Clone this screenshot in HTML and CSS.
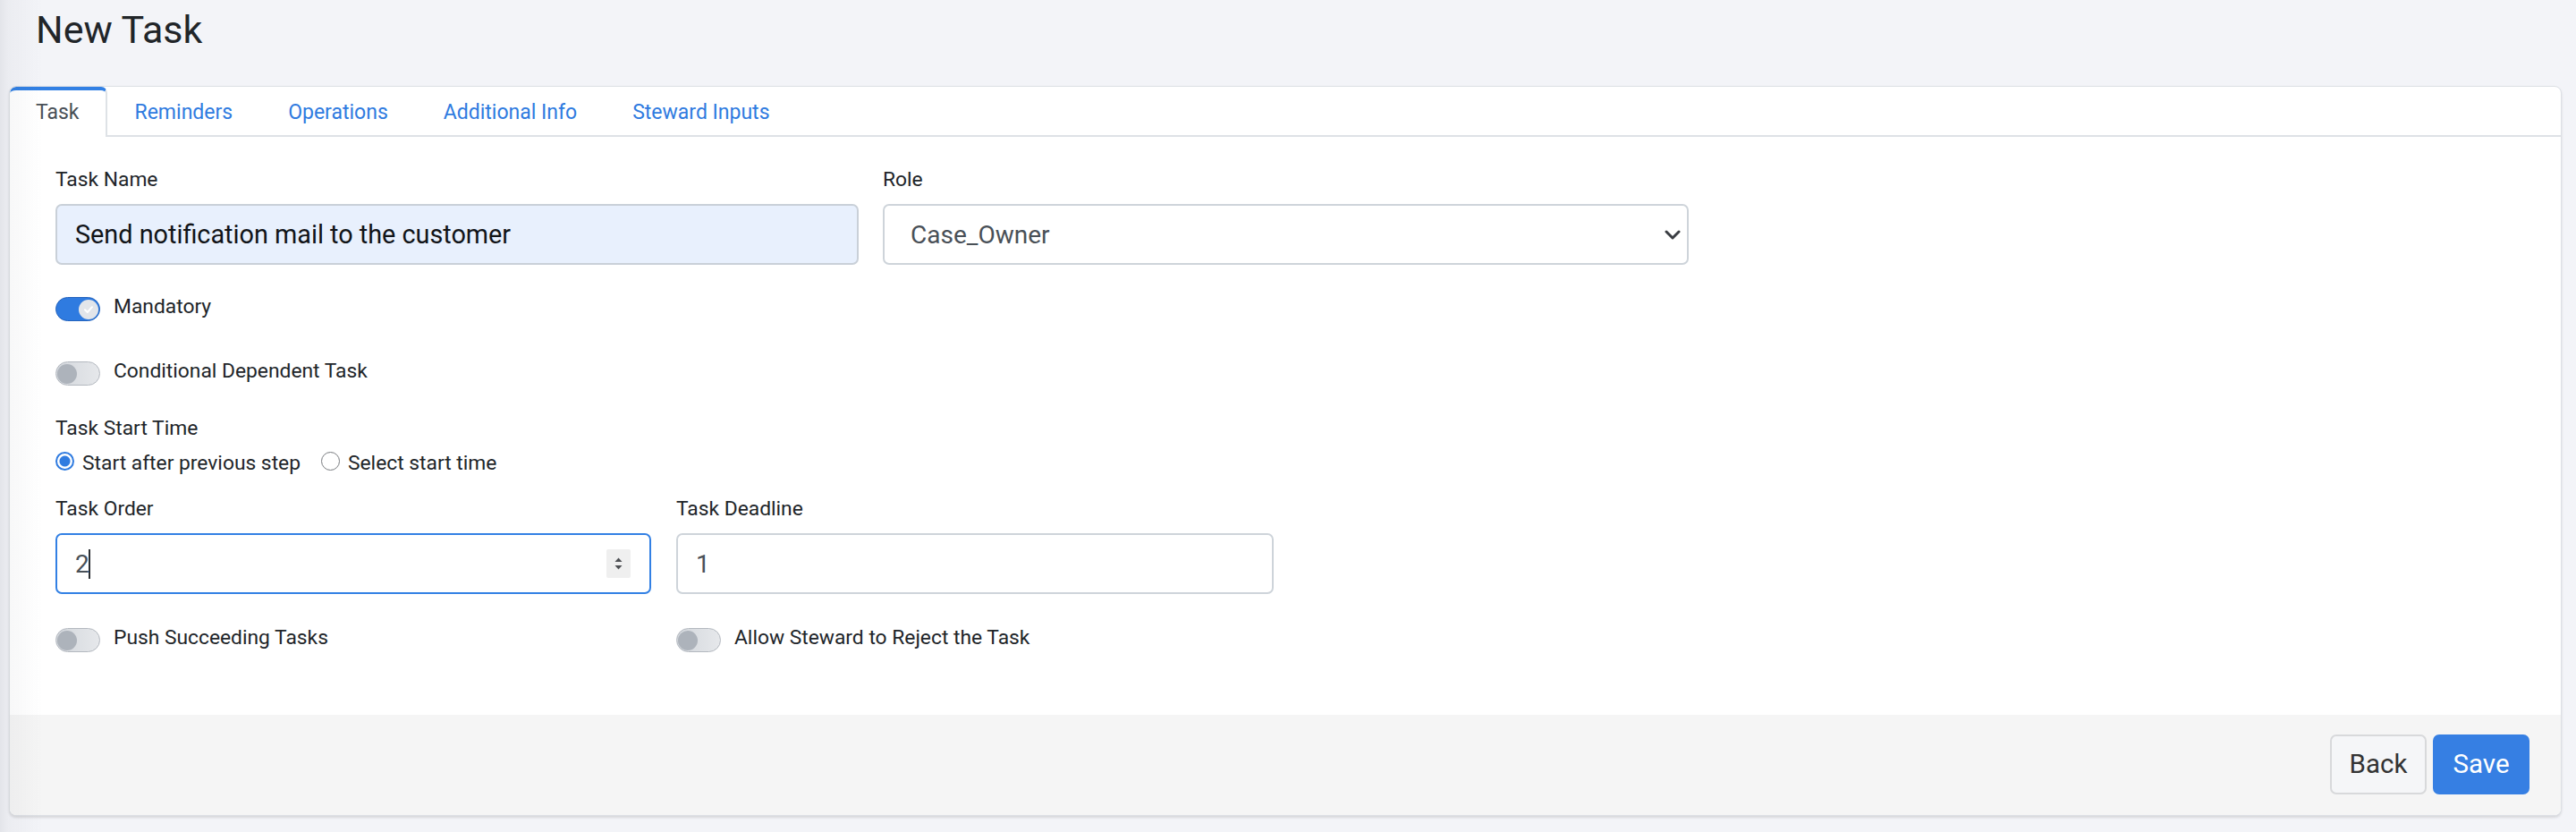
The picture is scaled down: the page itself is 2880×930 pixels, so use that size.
FILE: index.html
```html
<!DOCTYPE html>
<html lang="en">
<head>
<meta charset="utf-8">
<title>New Task</title>
<link rel="stylesheet" href="styles.css">
</head>
<body>
<div class="page">
  <header class="page-header">
    <h1 class="page-title">New Task</h1>
  </header>

  <section class="card">
    <nav class="tabs">
      <a class="tab tab-active">Task</a>
      <a class="tab">Reminders</a>
      <a class="tab">Operations</a>
      <a class="tab">Additional Info</a>
      <a class="tab">Steward Inputs</a>
    </nav>

    <div class="card-body">
      <div class="grid grid-wide">
        <div class="field">
          <label class="label">Task Name</label>
          <div class="control control-autofill">Send notification mail to the customer</div>
        </div>
        <div class="field">
          <label class="label">Role</label>
          <div class="control control-select">
            <span class="select-value">Case_Owner</span>
            <svg class="chevron" width="18" height="11" viewBox="0 0 18 11"><path d="M2 2 L9 9 L16 2" fill="none" stroke="#3a3d42" stroke-width="3" stroke-linecap="round" stroke-linejoin="round"/></svg>
          </div>
        </div>
      </div>

      <div class="switch-row row-mandatory">
        <span class="switch switch-on">
          <span class="knob">
            <svg width="12" height="10" viewBox="0 0 12 10"><path d="M2 5.2 L4.8 8 L10 2.2" fill="none" stroke="#ffffff" stroke-width="2" stroke-linecap="round" stroke-linejoin="round"/></svg>
          </span>
        </span>
        <span class="switch-text">Mandatory</span>
      </div>

      <div class="switch-row row-conditional">
        <span class="switch"><span class="knob"></span></span>
        <span class="switch-text">Conditional Dependent Task</span>
      </div>

      <div class="label label-start">Task Start Time</div>
      <div class="radio-row">
        <span class="radio radio-checked"></span>
        <span class="radio-text">Start after previous step</span>
        <span class="radio"></span>
        <span class="radio-text">Select start time</span>
      </div>

      <div class="grid grid-narrow row-order">
        <div class="field">
          <label class="label">Task Order</label>
          <div class="control control-focus">
            <span class="value">2<span class="caret"></span></span>
            <span class="spinner">
              <svg width="27" height="32" viewBox="0 0 27 32"><path d="M13.5 9.5 L17.5 14 L9.5 14 Z" fill="#4d4f53"/><path d="M9.5 18 L17.5 18 L13.5 22.5 Z" fill="#4d4f53"/></svg>
            </span>
          </div>
        </div>
        <div class="field">
          <label class="label">Task Deadline</label>
          <div class="control"><span class="value">1</span></div>
        </div>
      </div>

      <div class="grid grid-narrow row-push">
        <div class="switch-row">
          <span class="switch"><span class="knob"></span></span>
          <span class="switch-text">Push Succeeding Tasks</span>
        </div>
        <div class="switch-row">
          <span class="switch"><span class="knob"></span></span>
          <span class="switch-text">Allow Steward to Reject the Task</span>
        </div>
      </div>
    </div>

    <footer class="card-footer">
      <button class="btn btn-back">Back</button>
      <button class="btn btn-save">Save</button>
    </footer>
  </section>
</div>
</body>
</html>
```

FILE: styles.css
```css
* { box-sizing: border-box; }

html, body {
  margin: 0;
  padding: 0;
}

body {
  background: #f3f4f8;
  font-family: Roboto, "Noto Sans", "Liberation Sans", sans-serif;
  color: #212529;
  height: 930px;
  overflow: hidden;
}

body::before {
  content: "";
  position: fixed;
  top: 0;
  left: 0;
  bottom: 0;
  width: 48px;
  pointer-events: none;
  z-index: 5;
  background: linear-gradient(to right, rgba(40, 45, 60, 0.07) 0, rgba(40, 45, 60, 0.035) 10px, rgba(40, 45, 60, 0) 48px);
}

.page {
  padding: 0 16px 0 10px;
}

.page-header {
  height: 96px;
  padding: 7px 0 0 30px;
}

.page-title {
  margin: 0;
  font-size: 43px;
  line-height: 52px;
  font-weight: 400;
  color: #212529;
}

.card {
  background: #ffffff;
  border: 1px solid #dde0e5;
  border-radius: 8px;
  box-shadow: 0 2px 3px rgba(0, 0, 0, 0.12);
  height: 816px;
  display: flex;
  flex-direction: column;
  overflow: hidden;
}

.tabs {
  display: flex;
  height: 56px;
  border-bottom: 2px solid #dee2e6;
  flex: none;
}

.tab {
  display: block;
  height: 56px;
  padding: 0 30px;
  border: 1px solid transparent;
  border-top: 3px solid transparent;
  border-bottom: none;
  font-size: 23px;
  line-height: 51px;
  color: #2f7be0;
  text-decoration: none;
  border-radius: 7px 7px 0 0;
}

.tab-active {
  color: #495057;
  background: #ffffff;
  border-color: #dee2e6;
  border-width: 0 2px 0 0;
  border-top: 4px solid #3280e4;
  padding-left: 29px;
  padding-right: 29px;
  line-height: 50px;
}

.card-body {
  flex: 1;
  padding: 31px 51px 0 51px;
}

.grid {
  display: grid;
}

.grid-wide {
  grid-template-columns: 898px 901px;
  column-gap: 27px;
}

.grid-narrow {
  grid-template-columns: 666px 668px;
  column-gap: 28px;
}

.field {
  display: flex;
  flex-direction: column;
}

.label {
  display: block;
  font-size: 22.8px;
  line-height: 33px;
  color: #212529;
  margin-bottom: 11px;
}

.control {
  height: 68px;
  border: 2px solid #ced4da;
  border-radius: 7px;
  background: #ffffff;
  padding: 0 20px;
  display: flex;
  align-items: center;
  font-size: 28px;
  color: #495057;
}

.control-autofill {
  background: #e8f0fd;
  border-color: #c9d0d8;
  color: #111418;
  font-size: 28.8px;
}

.control-select {
  justify-content: space-between;
  padding: 0 7px 0 29px;
}

.chevron {
  display: block;
}

.control-focus {
  border-color: #3280e4;
  justify-content: space-between;
  padding-right: 21px;
}

.value {
  display: flex;
  align-items: center;
}

.caret {
  display: inline-block;
  width: 2px;
  height: 33px;
  background: #2b2f33;
  margin-left: -1px;
}

.spinner {
  display: block;
  width: 27px;
  height: 32px;
  background: #efefef;
  border-radius: 2px;
}

.spinner svg {
  display: block;
}

.switch-row {
  display: flex;
  align-items: flex-start;
  height: 33px;
}

.row-mandatory {
  margin-top: 30px;
}

.row-conditional {
  margin-top: 39px;
}

.switch {
  position: relative;
  flex: none;
  width: 50px;
  height: 27px;
  margin-top: 6px;
  margin-right: 15px;
  border-radius: 14px;
  border: 1.5px solid #b3b8bf;
  background: linear-gradient(to right, #d3d7dc, #e6e8eb);
  display: flex;
  align-items: center;
  padding: 0 1px;
}

.knob {
  width: 22px;
  height: 22px;
  border-radius: 50%;
  background: #adb3bb;
  display: flex;
  align-items: center;
  justify-content: center;
}

.switch-on {
  border-color: #2463bd;
  background: #2f7be0;
  justify-content: flex-end;
}

.switch-on .knob {
  background: #e2e5ea;
}

.switch-on .knob svg {
  display: block;
}

.switch-text {
  font-size: 22.8px;
  line-height: 33px;
  color: #212529;
}

.label-start {
  margin-top: 31px;
  margin-bottom: 0;
}

.radio-row {
  margin-top: 6px;
  display: flex;
  align-items: flex-start;
  height: 33px;
}

.radio {
  flex: none;
  width: 21px;
  height: 21px;
  margin-top: 4px;
  border-radius: 50%;
  border: 1.5px solid #777a7e;
  background: #ffffff;
  margin-right: 9px;
}

.radio-checked {
  border: 2px solid #2f7be0;
  background: radial-gradient(circle, #2f7be0 0, #2f7be0 5.5px, #ffffff 6.5px);
}

.radio-text {
  font-size: 22.8px;
  line-height: 33px;
  color: #212529;
  margin-right: 23px;
}

.row-order {
  margin-top: 18px;
}

.row-push {
  margin-top: 32px;
}

.card-footer {
  flex: none;
  height: 112px;
  background: #f5f5f5;
  padding: 22px 35px 23px 0;
  display: flex;
  justify-content: flex-end;
  gap: 7px;
}

.btn {
  width: 108px;
  height: 67px;
  border-radius: 7px;
  font-family: Roboto, "Noto Sans", "Liberation Sans", sans-serif;
  font-size: 29.5px;
  line-height: 1;
  cursor: pointer;
}

.btn-back {
  background: #f5f6f8;
  border: 2px solid #d8d9db;
  color: #333333;
}

.btn-save {
  background: #367fe3;
  border: 2px solid #367fe3;
  color: #ffffff;
}
```
